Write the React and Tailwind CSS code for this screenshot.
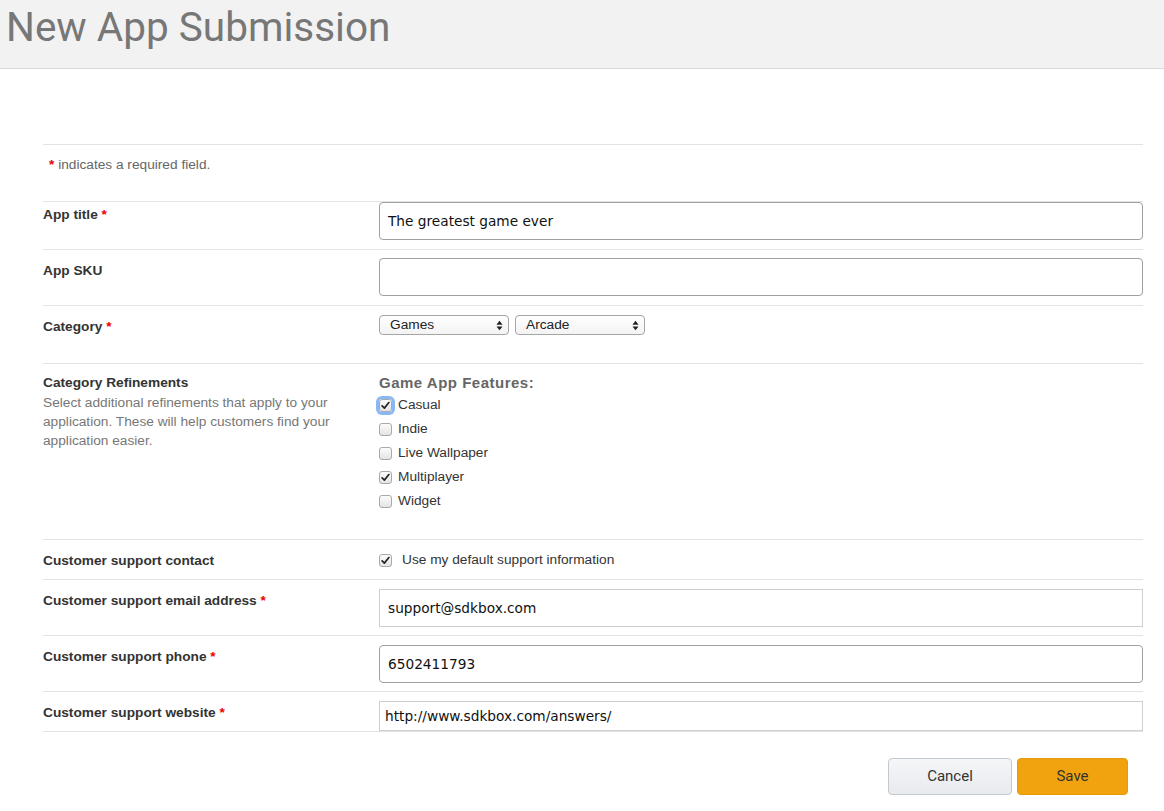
import React from 'react';

// Small checkbox drawn by hand, matching the old Chrome look
const Check = ({ checked, focused }) => (
  <span
    className={`inline-flex h-[13px] w-[13px] shrink-0 items-center justify-center rounded-[3px] border border-[#a9a9a9] bg-gradient-to-b from-[#fcfcfc] to-[#e4e4e4] ${
      focused ? 'ring-[3px] ring-[#8ab8f5]' : ''
    }`}
  >
    {checked && (
      <svg viewBox="0 0 12 12" className="h-[9px] w-[9px]">
        <path d="M1.5 6.5 L4.5 9.5 L10.5 2" fill="none" stroke="#222" strokeWidth="2.2" strokeLinecap="round" strokeLinejoin="round" />
      </svg>
    )}
  </span>
);

const Select = ({ value }) => (
  <div className="flex h-[20px] w-[130px] items-center justify-between rounded-[4px] border border-[#a6a6a6] bg-gradient-to-b from-white to-[#f3f3f3] pl-[10px] pr-[5px] text-[13.7px] text-[#222]">
    <span>{value}</span>
    <svg viewBox="0 0 8 12" className="h-[11px] w-[7px]">
      <path d="M4 0.5 L7.5 5 L0.5 5 Z M0.5 7 L7.5 7 L4 11.5 Z" fill="#222" />
    </svg>
  </div>
);

const Star = () => <span className="text-[#e00] font-bold"> *</span>;

const Label = ({ children, className = '' }) => (
  <div className={`w-[336px] shrink-0 text-[13.7px] font-bold leading-4 text-[#333] ${className}`}>{children}</div>
);

const features = [
  { name: 'Casual', checked: true, focused: true },
  { name: 'Indie' },
  { name: 'Live Wallpaper' },
  { name: 'Multiplayer', checked: true },
  { name: 'Widget' },
];

export default function App() {
  return (
    <div className="min-h-screen bg-white font-['Liberation_Sans',Arial,sans-serif]">
      {/* Header */}
      <div className="h-[69px] border-b border-[#dcdcdc] bg-[#f2f2f2] pl-[6px]">
        <h1 className="pt-[3px] font-['Roboto',sans-serif] text-[40.5px] leading-[48px] font-normal text-[#777]">
          New App Submission
        </h1>
      </div>

      <div className="ml-[43px] mt-[75px] w-[1100px]">
        {/* required hint */}
        <div className="h-[57px] border-t border-[#e3e3e3] pl-[6px] pt-[12px] text-[13.7px] leading-4 text-[#666]">
          <span className="font-bold text-[#e00]">*</span> indicates a required field.
        </div>

        {/* App title */}
        <div className="flex h-[48px] border-t border-[#e3e3e3]">
          <Label className="pt-[5px]">
            App title<Star />
          </Label>
          <div className="flex h-[38px] flex-1 items-center rounded-[4px] border border-[#a0a0a0] px-[8px] font-['DejaVu_Sans',Verdana,sans-serif] text-[13.7px] text-[#111]">
            The greatest game ever
          </div>
        </div>

        {/* App SKU */}
        <div className="flex h-[56px] border-t border-[#e3e3e3] pt-[8px]">
          <Label className="pt-[5px]">App SKU</Label>
          <div className="h-[38px] flex-1 rounded-[4px] border border-[#a0a0a0]" />
        </div>

        {/* Category */}
        <div className="flex h-[58px] border-t border-[#e3e3e3] pt-[9px]">
          <Label className="pt-[4px]">
            Category<Star />
          </Label>
          <div className="flex gap-[6px]">
            <Select value="Games" />
            <Select value="Arcade" />
          </div>
        </div>

        {/* Category Refinements */}
        <div className="flex h-[176px] border-t border-[#e3e3e3] pt-[11px]">
          <div className="w-[336px] shrink-0 pr-[30px] text-[13.7px]">
            <div className="font-bold leading-4 text-[#333]">Category Refinements</div>
            <div className="mt-[2px] leading-[19px] text-[#777]">
              Select additional refinements that apply to your application. These will help customers find your
              application easier.
            </div>
          </div>
          <div className="text-[13.7px]">
            <div className="text-[15px] font-bold leading-4 tracking-[0.5px] text-[#666]">Game App Features:</div>
            <div className="mt-[2px] flex flex-col">
              {features.map((f) => (
                <div key={f.name} className="flex h-[24px] items-center gap-[6px] text-[#333]">
                  <Check checked={f.checked} focused={f.focused} />
                  <span>{f.name}</span>
                </div>
              ))}
            </div>
          </div>
        </div>

        {/* Customer support contact */}
        <div className="flex h-[40px] items-center border-t border-[#e3e3e3] pt-[2px]">
          <Label>Customer support contact</Label>
          <div className="flex items-center gap-[10px] text-[13.7px] text-[#333]">
            <Check checked />
            <span>Use my default support information</span>
          </div>
        </div>

        {/* Email */}
        <div className="flex h-[56px] border-t border-[#e3e3e3] pt-[9px]">
          <Label className="pt-[4px]">
            Customer support email address<Star />
          </Label>
          <div className="flex h-[38px] flex-1 items-center border border-[#cfcfcf] px-[8px] font-['DejaVu_Sans',Verdana,sans-serif] text-[13.7px] text-[#111]">
            support@sdkbox.com
          </div>
        </div>

        {/* Phone */}
        <div className="flex h-[56px] border-t border-[#e3e3e3] pt-[9px]">
          <Label className="pt-[4px]">
            Customer support phone<Star />
          </Label>
          <div className="flex h-[38px] flex-1 items-center rounded-[4px] border border-[#a0a0a0] px-[8px] font-['DejaVu_Sans',Verdana,sans-serif] text-[13.7px] text-[#111]">
            6502411793
          </div>
        </div>

        {/* Website */}
        <div className="flex h-[41px] border-t border-b border-[#e3e3e3] pt-[9px]">
          <Label className="pt-[4px]">
            Customer support website<Star />
          </Label>
          <div className="flex h-[30px] flex-1 items-center border border-[#cfcfcf] px-[5px] font-['DejaVu_Sans',Verdana,sans-serif] text-[13.7px] text-[#111]">
            http://www.sdkbox.com/answers/
          </div>
        </div>

        {/* Buttons */}
        <div className="mt-[26px] flex justify-end gap-[5px] pr-[15px] font-['Roboto',sans-serif] text-[15px] text-[#333]">
          <button className="h-[37px] w-[124px] rounded-[4px] border border-[#c3c7cf] bg-gradient-to-b from-[#f5f6f8] to-[#e8eaee]">
            Cancel
          </button>
          <button className="h-[37px] w-[111px] rounded-[4px] border border-[#e39a0c] bg-[#f0a30f]">Save</button>
        </div>
      </div>
    </div>
  );
}
